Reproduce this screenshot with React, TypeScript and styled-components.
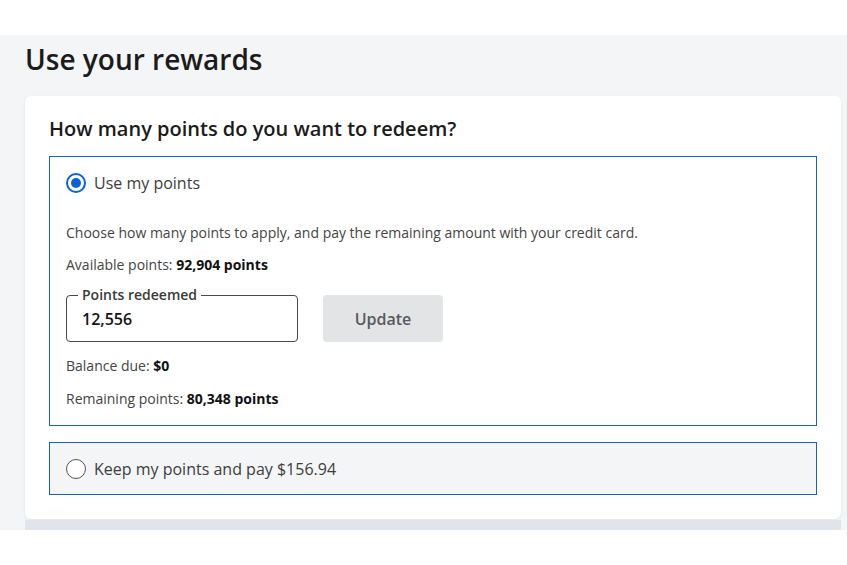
import React from "react";
import styled, { createGlobalStyle } from "styled-components";

const Global = createGlobalStyle`
  html, body { margin: 0; padding: 0; background: #ffffff; }
  body { font-family: "Open Sans", "Noto Sans", Arial, sans-serif; color: #222; }
  * { box-sizing: border-box; }
`;

const TopBar = styled.div`
  height: 35px;
  background: #ffffff;
`;

const Section = styled.section`
  background: #f4f5f7;
  padding: 6px 6px 0 25px;
  height: 495px;
  display: flex;
  flex-direction: column;
`;

const PageTitle = styled.h1`
  margin: 0;
  font-size: 28px;
  line-height: 36px;
  font-weight: 600;
  color: #1b1b1b;
`;

const Card = styled.div`
  margin-top: 19px;
  background: #ffffff;
  border-radius: 6px;
  box-shadow: 0 1px 3px rgba(0, 0, 0, 0.08);
  padding: 19px 24px 24px 24px;
  display: flex;
  flex-direction: column;
`;

const NextCardEdge = styled.div`
  height: 10px;
  background: #e1e5eb;
  margin-top: 1px;
`;

const Question = styled.h2`
  margin: 0 0 13px 0;
  font-size: 20px;
  line-height: 28px;
  font-weight: 600;
  color: #1b1b1b;
`;

const Option = styled.div<{ $muted?: boolean }>`
  border: 1px solid #1463b5;
  background: ${(p) => (p.$muted ? "#f4f5f7" : "#ffffff")};
  padding: ${(p) => (p.$muted ? "14px 16px 13px 16px" : "14px 16px 16px 16px")};
  display: flex;
  flex-direction: column;
  & + & {
    margin-top: 16px;
  }
`;

const RadioRow = styled.label`
  display: flex;
  align-items: center;
  gap: 8px;
  height: 24px;
  font-size: 16px;
  color: #3d3d3d;
  cursor: pointer;
`;

const RadioCircle = styled.span<{ $checked?: boolean }>`
  width: 20px;
  height: 20px;
  border-radius: 50%;
  border: ${(p) => (p.$checked ? "2px solid #0b62d6" : "1.5px solid #555")};
  background: #ffffff;
  display: flex;
  align-items: center;
  justify-content: center;
  flex: none;
  &::after {
    content: "";
    display: ${(p) => (p.$checked ? "block" : "none")};
    width: 10px;
    height: 10px;
    border-radius: 50%;
    background: #0b62d6;
  }
`;

const Text = styled.p<{ $gap: number }>`
  margin: ${(p) => p.$gap}px 0 0 0;
  font-size: 14px;
  line-height: 20px;
  color: #444;
`;

const Strong = styled.strong`
  font-weight: 700;
  color: #111;
`;

const InputRow = styled.div`
  margin-top: 20px;
  display: flex;
  gap: 25px;
`;

const Field = styled.div`
  position: relative;
  width: 232px;
  height: 47px;
  border: 1px solid #4a4a4a;
  border-radius: 4px;
  display: flex;
  align-items: center;
  padding: 0 15px 0 15px;
`;

const FieldLabel = styled.span`
  position: absolute;
  top: -11px;
  left: 11px;
  padding: 0 4px;
  background: #ffffff;
  font-size: 14px;
  line-height: 19px;
  font-weight: 600;
  color: #3a3a3a;
`;

const FieldInput = styled.input`
  border: none;
  outline: none;
  width: 100%;
  padding: 0;
  font-family: inherit;
  font-size: 16px;
  font-weight: 600;
  color: #141414;
  background: transparent;
`;

const UpdateButton = styled.button`
  width: 120px;
  height: 47px;
  border: none;
  border-radius: 4px;
  background: #e3e4e6;
  font-family: inherit;
  font-size: 16px;
  font-weight: 600;
  color: #555a60;
  cursor: pointer;
`;

export default function App() {
  return (
    <>
      <Global />
      <TopBar />
      <Section>
        <PageTitle>Use your rewards</PageTitle>
        <Card>
          <Question>How many points do you want to redeem?</Question>
          <Option>
            <RadioRow>
              <RadioCircle $checked />
              Use my points
            </RadioRow>
            <Text $gap={28}>
              Choose how many points to apply, and pay the remaining amount with your credit card.
            </Text>
            <Text $gap={12}>
              Available points: <Strong>92,904 points</Strong>
            </Text>
            <InputRow>
              <Field>
                <FieldLabel>Points redeemed</FieldLabel>
                <FieldInput defaultValue="12,556" />
              </Field>
              <UpdateButton>Update</UpdateButton>
            </InputRow>
            <Text $gap={14}>
              Balance due: <Strong>$0</Strong>
            </Text>
            <Text $gap={13}>
              Remaining points: <Strong>80,348 points</Strong>
            </Text>
          </Option>
          <Option $muted>
            <RadioRow>
              <RadioCircle />
              Keep my points and pay $156.94
            </RadioRow>
          </Option>
        </Card>
        <NextCardEdge />
      </Section>
    </>
  );
}
